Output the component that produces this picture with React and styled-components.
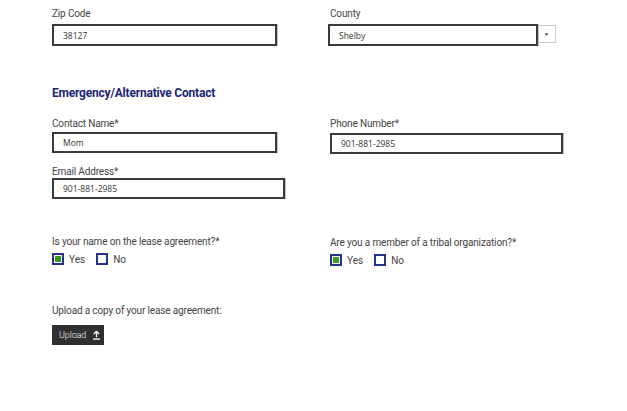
import React from "react";
import styled, { createGlobalStyle } from "styled-components";

const Global = createGlobalStyle`
  html, body { margin: 0; padding: 0; background: #fff; }
  body { font-family: Roboto, "Open Sans", Arial, sans-serif; color: #333; }
  * { box-sizing: border-box; }
`;

const Page = styled.div`
  width: 627px;
  height: 411px;
  padding: 8px 0 0 52px;
  overflow: hidden;
`;

const Row = styled.div`
  display: grid;
  grid-template-columns: 278px 1fr;
  margin-top: ${(p) => p.$mt || 0}px;
`;

const Field = styled.div`
  display: flex;
  flex-direction: column;
  align-items: flex-start;
  padding-top: ${(p) => p.$pt || 0}px;
`;

const Label = styled.label`
  font-size: 10px;
  line-height: 12px;
  color: #444;
  letter-spacing: -0.15px;
  margin-bottom: ${(p) => p.$gap ?? 4}px;
`;

const Input = styled.div`
  width: ${(p) => p.$w}px;
  height: ${(p) => p.$h || 21}px;
  border: 2px solid #3a3a3a;
  box-shadow: 1px 0 0 #c4c4c4;
  background: #fff;
  display: flex;
  align-items: center;
  padding-left: 9px;
  font-family: "Open Sans", sans-serif;
  font-size: 8.5px;
  font-weight: 400;
  color: #333;
`;

const SelectWrap = styled.div`
  display: flex;
  align-items: flex-start;
  margin-left: -2px;
`;

const ArrowBox = styled.div`
  width: 18px;
  height: 18px;
  margin-top: 1px;
  border: 1px solid #ccc;
  border-left: none;
  display: flex;
  align-items: center;
  justify-content: center;
  font-size: 5px;
  color: #333;
`;

const Heading = styled.h2`
  margin: 0;
  font-size: 12px;
  font-weight: 700;
  color: #1a2578;
  letter-spacing: -0.2px;
`;

const Options = styled.div`
  display: flex;
  align-items: center;
  gap: 5px;
  margin-top: 1px;
`;

const Box = styled.span`
  width: 12px;
  height: 12px;
  border: 2px solid #28328c;
  background: ${(p) => (p.$checked ? "#3a9c1e" : "#fff")};
  box-shadow: ${(p) => (p.$checked ? "inset 0 0 0 1px #fff" : "none")};
  display: inline-block;
`;

const OptText = styled.span`
  font-size: 10px;
  color: #444;
  margin-right: ${(p) => p.$mr || 0}px;
`;

const UploadButton = styled.button`
  margin-top: 4px;
  height: 20px;
  width: 52px;
  padding: 0 0 0 7px;
  border: none;
  background: #303030;
  color: #f2f2f2;
  font-family: Roboto, sans-serif;
  font-weight: 300;
  font-size: 9px;
  letter-spacing: -0.1px;
  display: flex;
  align-items: center;
  gap: 6px;
  white-space: nowrap;

  svg { flex: none; }
`;

const Check = ({ label, checked, mr }) => (
  <>
    <Box $checked={checked} />
    <OptText $mr={mr}>{label}</OptText>
  </>
);

export default function App() {
  return (
    <Page>
      <Global />
      <Row>
        <Field>
          <Label>Zip Code</Label>
          <Input $w={225} $h={22}>38127</Input>
        </Field>
        <Field>
          <Label>County</Label>
          <SelectWrap>
            <Input $w={210} $h={22}>Shelby</Input>
            <ArrowBox>▼</ArrowBox>
          </SelectWrap>
        </Field>
      </Row>

      <Row $mt={40}>
        <Heading>Emergency/Alternative Contact</Heading>
      </Row>

      <Row $mt={18}>
        <Field>
          <Label $gap={2}>Contact Name*</Label>
          <Input $w={225}>Mom</Input>
        </Field>
        <Field>
          <Label $gap={3}>Phone Number*</Label>
          <Input $w={233}>901-881-2985</Input>
        </Field>
      </Row>

      <Row $mt={12}>
        <Field>
          <Label $gap={0}>Email Address*</Label>
          <Input $w={233}>901-881-2985</Input>
        </Field>
      </Row>

      <Row $mt={37}>
        <Field>
          <Label>Is your name on the lease agreement?*</Label>
          <Options>
            <Check label="Yes" checked mr={6} />
            <Check label="No" />
          </Options>
        </Field>
        <Field $pt={1}>
          <Label>Are you a member of a tribal organization?*</Label>
          <Options>
            <Check label="Yes" checked mr={6} />
            <Check label="No" />
          </Options>
        </Field>
      </Row>

      <Row $mt={39}>
        <Field>
          <Label>Upload a copy of your lease agreement:</Label>
          <UploadButton>
            Upload
            <svg width="9" height="10" viewBox="0 0 9 10">
              <path d="M4.5 1.2 L1.8 4 M4.5 1.2 L7.2 4 M4.5 1.2 V7.2" stroke="#fff" strokeWidth="1.3" fill="none" />
              <rect x="1" y="8.4" width="7" height="1.3" fill="#fff" />
            </svg>
          </UploadButton>
        </Field>
      </Row>
    </Page>
  );
}
